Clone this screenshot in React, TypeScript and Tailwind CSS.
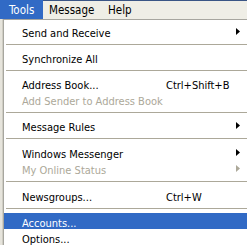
import React from "react";

const Arrow = ({ gray }: { gray?: boolean }) => (
  <svg width="4" height="7" viewBox="0 0 4 7" className="block">
    <path d="M0 0 L4 3.5 L0 7 Z" fill={gray ? "#aca899" : "#000"} />
  </svg>
);

type Item = {
  label?: string;
  shortcut?: string;
  arrow?: boolean;
  disabled?: boolean;
  active?: boolean;
  sep?: boolean;
  tall?: boolean;
};

const items: Item[] = [
  { label: "Send and Receive", arrow: true },
  { sep: true },
  { label: "Synchronize All" },
  { sep: true },
  { label: "Address Book...", shortcut: "Ctrl+Shift+B" },
  { label: "Add Sender to Address Book", disabled: true },
  { sep: true },
  { label: "Message Rules", arrow: true },
  { sep: true, tall: true },
  { label: "Windows Messenger", arrow: true },
  { label: "My Online Status", arrow: true, disabled: true },
  { sep: true, tall: true },
  { label: "Newsgroups...", shortcut: "Ctrl+W" },
  { sep: true },
  { label: "Accounts...", active: true },
  { label: "Options..." },
];

export default function App() {
  return (
    <div
      className="w-[247px] h-[249px] overflow-hidden bg-white text-[11px] leading-none"
      style={{ fontFamily: '"DejaVu Sans Condensed", "DejaVu Sans", Tahoma, sans-serif' }}
    >
      <div className="h-[19px] flex bg-[#efeee6] border-t border-[#3a5585] text-[11.5px]">
        <div className="w-[43px] shrink-0 -mt-px h-[19px] bg-[#316ac5] text-white flex items-center pl-[9px]">
          <span className="translate-y-[1px]">Tools</span>
        </div>
        <div className="w-[65px] shrink-0 flex items-center pl-[6px] text-black">
          <span className="translate-y-[1px]">Message</span>
        </div>
        <div className="flex items-center text-black">
          <span className="translate-y-[1px]">Help</span>
        </div>
      </div>
      <div className="flex">
        <div className="w-[3px] shrink-0 bg-[#e6e4dc] border-r border-[#d0cec4]" />
        <div className="flex-1 min-w-0 border-l border-t border-[#a7a69f] pt-[3px] bg-white">
          {items.map((it, i) =>
            it.sep ? (
              <div key={i} className={`${it.tall ? "h-[11px]" : "h-[10px]"} flex items-center pl-[2px]`}>
                <div className="h-px w-full bg-[#aca899]" />
              </div>
            ) : (
              <div
                key={i}
                className={`h-[16px] flex items-center pl-[18px] pr-[7px] ${
                  it.active ? "bg-[#316ac5] text-white" : it.disabled ? "text-[#aca899]" : "text-black"
                }`}
              >
                <div className="w-[144px] shrink-0 whitespace-nowrap translate-y-[1.5px]">{it.label}</div>
                <div className="flex-1 whitespace-nowrap translate-y-[1.5px]">{it.shortcut}</div>
                {it.arrow && <Arrow gray={it.disabled} />}
              </div>
            )
          )}
        </div>
      </div>
    </div>
  );
}
